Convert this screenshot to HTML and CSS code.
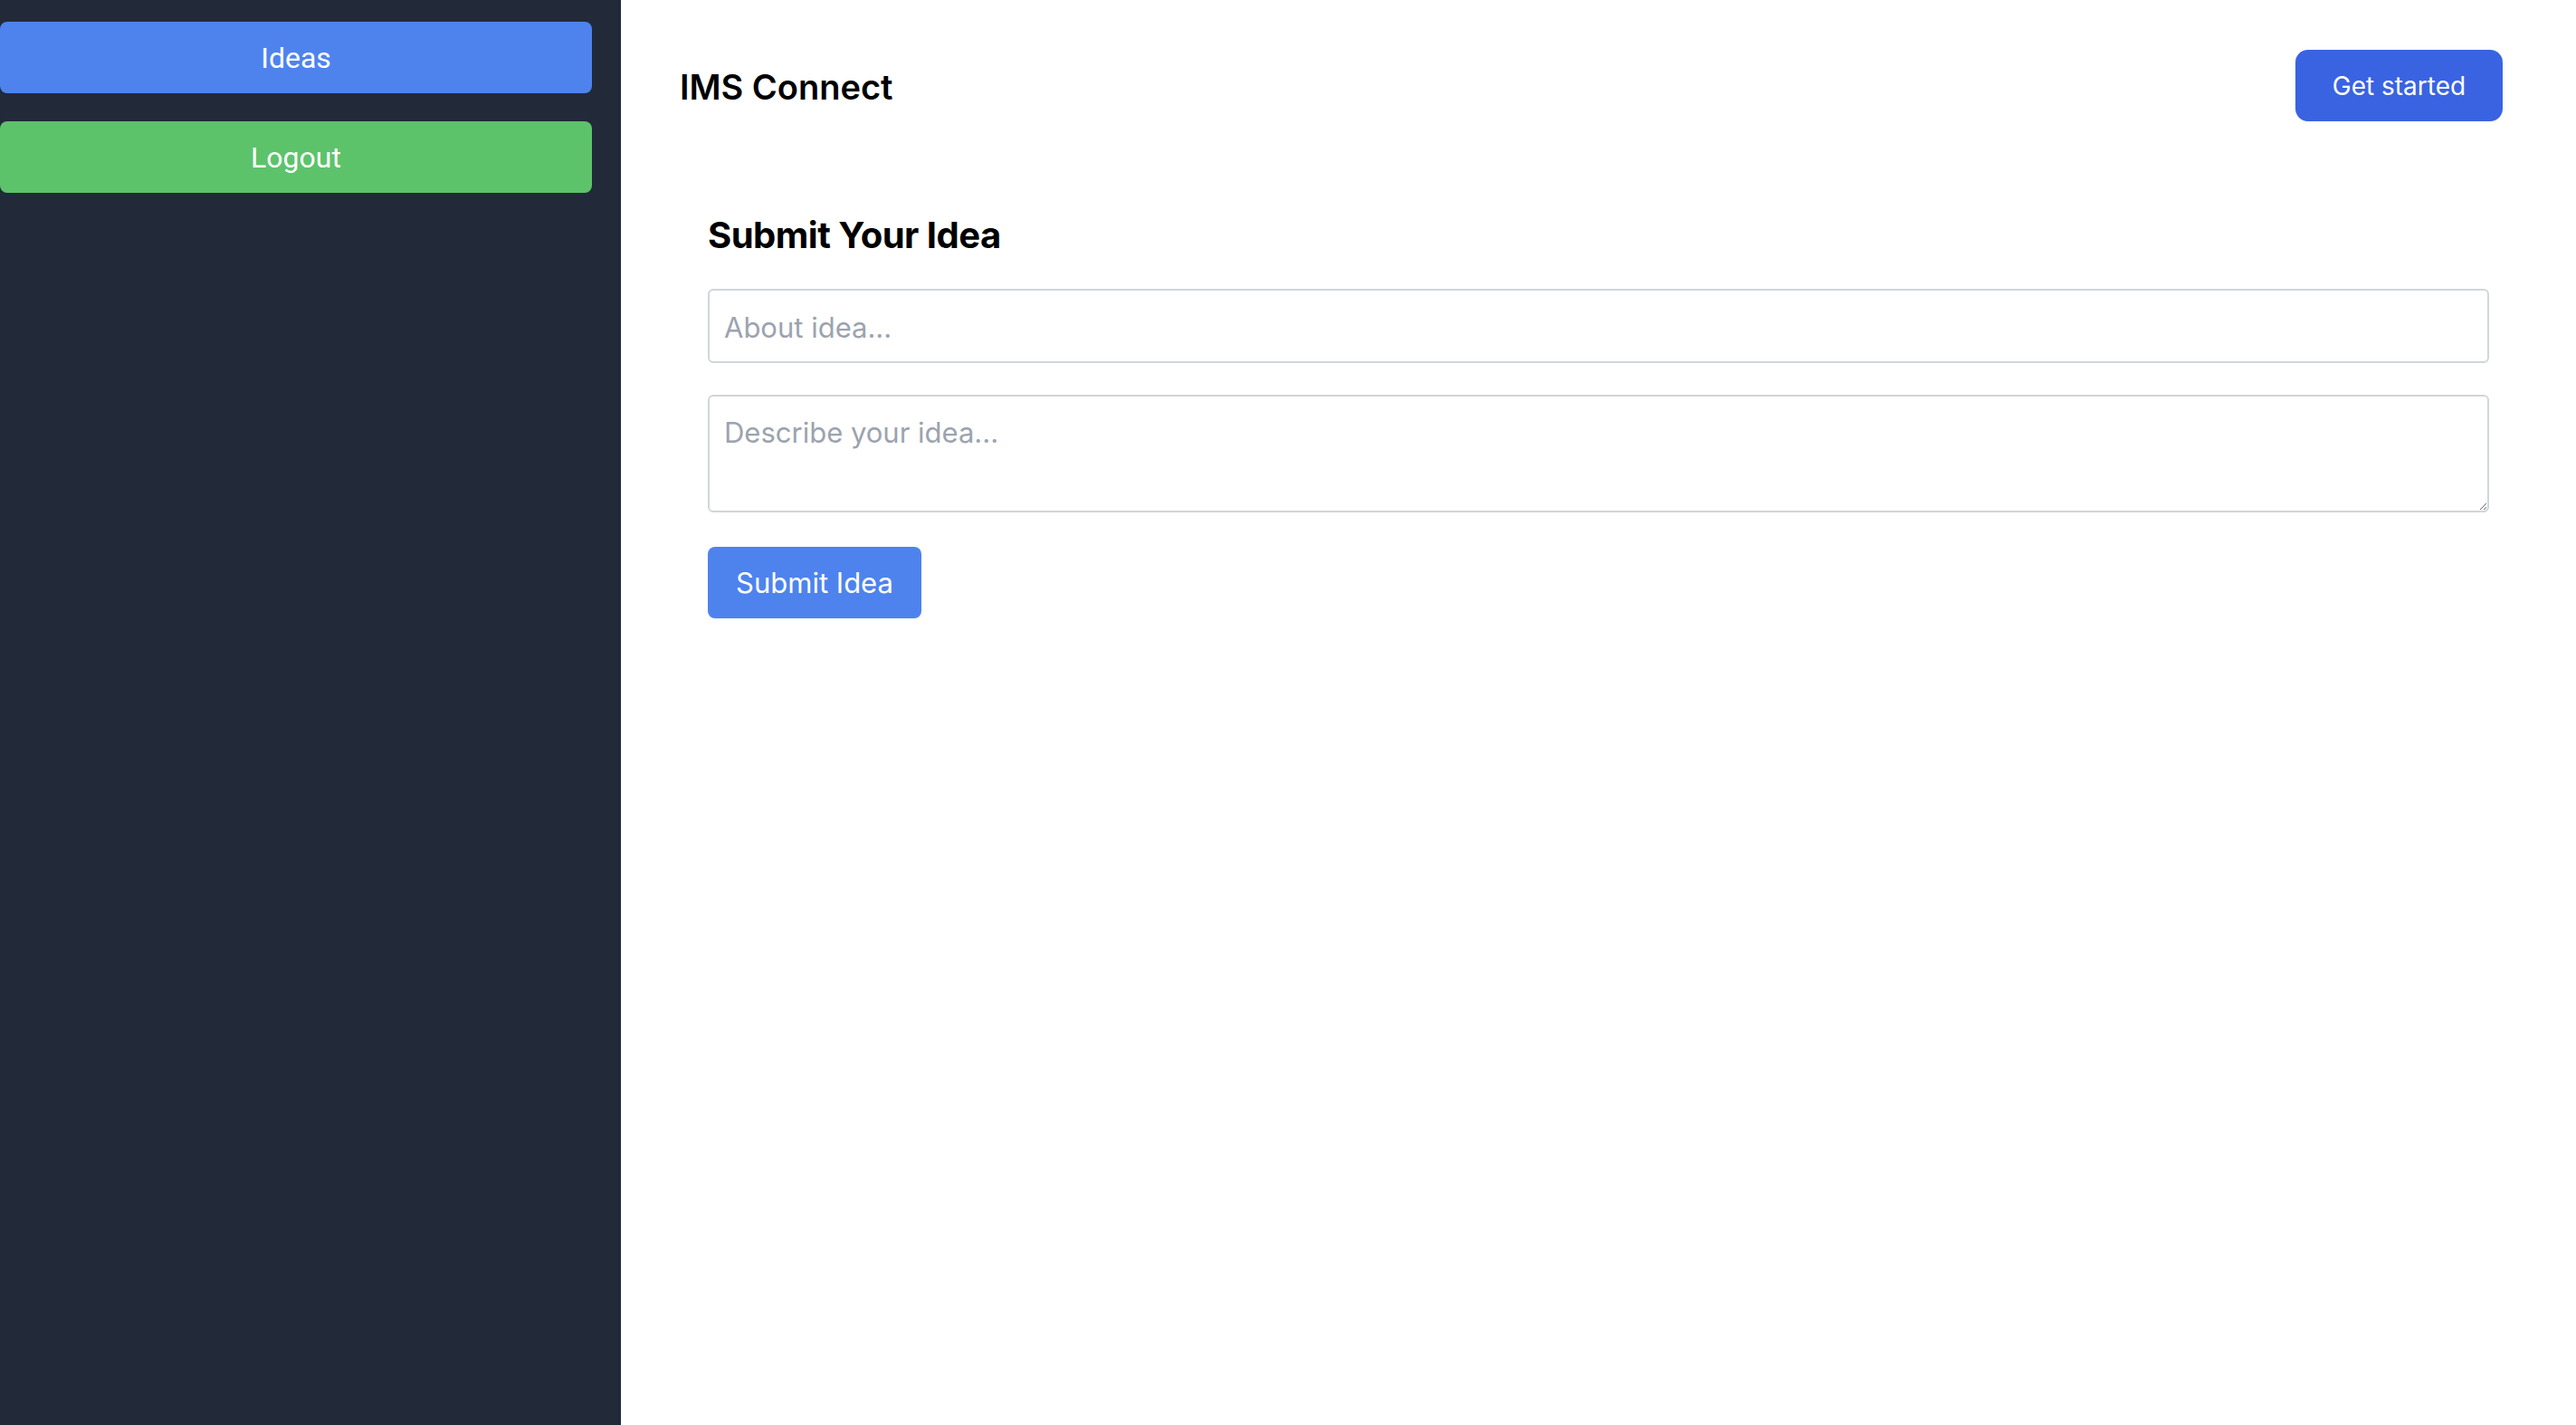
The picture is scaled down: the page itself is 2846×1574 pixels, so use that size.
FILE: index.html
```html
<!DOCTYPE html>
<html lang="en">
<head>
<meta charset="utf-8">
<title>IMS Connect</title>
<link rel="stylesheet" href="styles.css">
</head>
<body>
<div class="app">
  <aside class="sidebar">
    <button class="side-btn side-ideas">Ideas</button>
    <button class="side-btn side-logout">Logout</button>
  </aside>
  <main class="main">
    <header class="topbar">
      <h1 class="brand">IMS Connect</h1>
      <button class="cta">Get started</button>
    </header>
    <section class="form-wrap">
      <h2 class="form-title">Submit Your Idea</h2>
      <form class="idea-form">
        <input class="field" type="text" placeholder="About idea...">
        <textarea class="field area" placeholder="Describe your idea..."></textarea>
        <div><button type="button" class="submit">Submit Idea</button></div>
      </form>
    </section>
  </main>
</div>
</body>
</html>
```
FILE: styles.css
```css
* { box-sizing: border-box; }
html, body { margin: 0; padding: 0; height: 100%; }
body { font-family: Inter, "Noto Sans", sans-serif; background: #fff; color: #000; }
.app { display: flex; min-height: 1574px; }
.sidebar {
  width: 686px;
  flex-shrink: 0;
  background: #222938;
  padding: 24px 32px 0 0;
  display: flex;
  flex-direction: column;
  gap: 31px;
}
.side-btn {
  height: 79px;
  width: 100%;
  border: none;
  border-radius: 8px;
  color: #fff;
  font-family: Roboto, "Liberation Sans", sans-serif;
  font-size: 32px;
  cursor: pointer;
}
.side-ideas { background: #4e83ee; }
.side-logout { background: #5cc36b; }
.main { flex: 1; display: flex; flex-direction: column; }
.topbar {
  display: flex;
  align-items: center;
  justify-content: space-between;
  padding: 55px 81px 0 65px;
}
.brand { margin: 2px 0 0; font-size: 38px; font-weight: 600; letter-spacing: 0; }
.cta {
  height: 79px;
  width: 229px;
  border: none;
  border-radius: 14px;
  background: #3a63e2;
  color: #fff;
  font-family: Inter, sans-serif;
  font-size: 28px;
  cursor: pointer;
}
.form-wrap { padding: 102px 96px 0 96px; }
.form-title { margin: 0 0 35px; font-size: 40px; font-weight: 700; line-height: 48px; letter-spacing: -0.5px; }
.idea-form { display: flex; flex-direction: column; gap: 35px; width: 1968px; }
.field {
  width: 100%;
  border: 2px solid #d1d5db;
  border-radius: 6px;
  font-family: Inter, sans-serif;
  font-size: 31px;
  padding: 2px 16px 0;
  height: 82px;
  color: #111;
}
.field::placeholder { color: #9ca3af; }
.area { height: 130px; padding: 21px 16px 14px; resize: vertical; display: block; }
.submit {
  height: 79px;
  width: 236px;
  border: none;
  border-radius: 8px;
  background: #4e83ee;
  color: #fff;
  font-family: Inter, sans-serif;
  font-size: 31px;
  cursor: pointer;
  margin-top: 3px;
}
```
